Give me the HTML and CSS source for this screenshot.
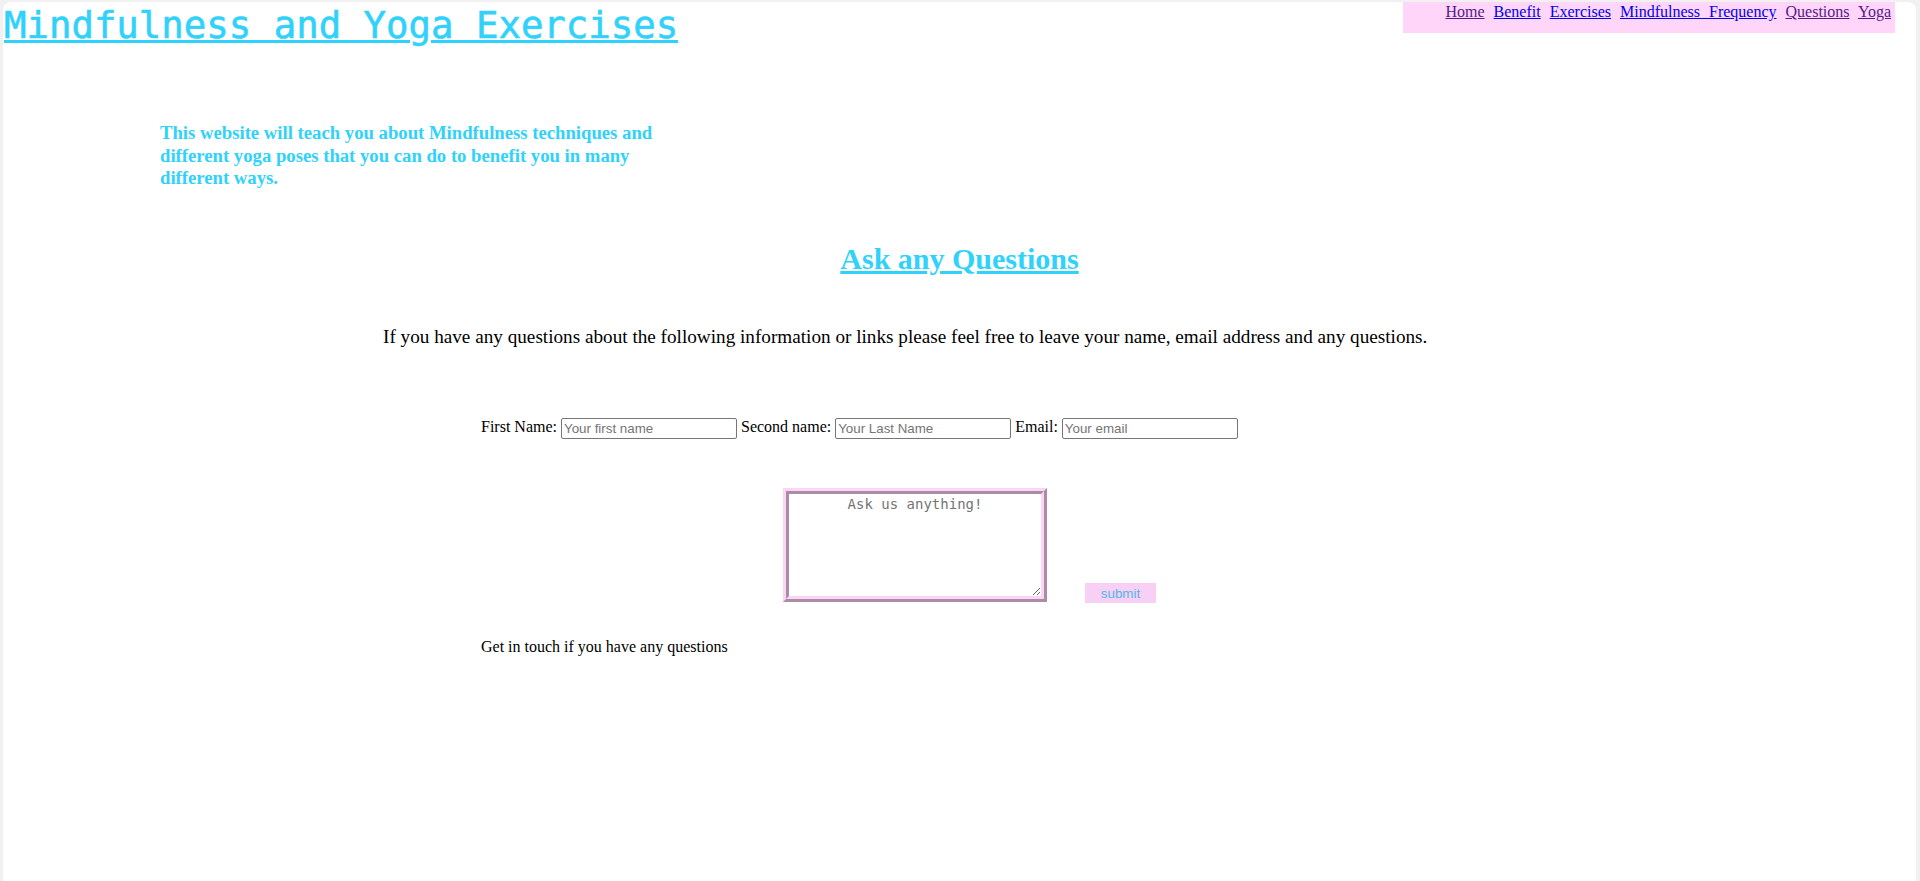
FILE: index.html
```html
<!DOCTYPE html>
<html lang="en">
<head>
<meta charset="utf-8">
<title>Mindfulness and Yoga Exercises</title>
<link rel="stylesheet" href="styles.css">
</head>
<body>
<div class="window">
  <header class="top">
    <h1 class="title"><a href="#">Mindfulness and Yoga Exercises</a></h1>
    <nav class="nav">
      <a href="#" class="visited">Home</a> <a href="#">Benefit</a> <a href="#">Exercises</a> <a href="#">Mindfulness Frequency</a> <a href="#" class="visited">Questions</a> <a href="#" class="visited">Yoga</a>
    </nav>
  </header>

  <p class="intro">This website will teach you about Mindfulness techniques and different yoga poses that you can do to benefit you in many different ways.</p>

  <h2 class="ask">Ask any Questions</h2>

  <p class="lead">If you have any questions about the following information or links please feel free to leave your name, email address and any questions.</p>

  <form class="form">
    <div class="fields">
      <label>First Name:</label> <input type="text" placeholder="Your first name"> <label>Second name:</label> <input type="text" placeholder="Your Last Name"> <label>Email:</label> <input type="text" placeholder="Your email">
    </div>
    <div class="message">
      <textarea placeholder="Ask us anything!"></textarea>
      <button type="button" class="submit">submit</button>
    </div>
    <p class="touch">Get in touch if you have any questions</p>
  </form>
</div>
</body>
</html>
```

FILE: styles.css
```css
html, body {
  margin: 0;
  padding: 0;
}
body {
  background: #f1f1f1;
  font-family: "Liberation Serif", "Times New Roman", serif;
  font-size: 16px;
  color: #000;
}
.window {
  margin: 2px 4px 0 3px;
  min-height: 879px;
  background: #fff;
  border-radius: 8px 8px 0 0;
  overflow: hidden;
}
.top {
  display: flex;
  justify-content: space-between;
  align-items: flex-start;
}
.title {
  margin: 2px 0 0 1px;
  font-family: "DejaVu Sans Mono", "Liberation Mono", monospace;
  font-size: 37.35px;
  font-weight: normal;
  line-height: 43px;
}
.title a {
  color: #30d2fb;
  text-decoration: underline;
  text-decoration-thickness: 3px;
  -webkit-text-stroke: 0.6px #30d2fb;
}
.nav {
  width: 484px;
  height: 30px;
  margin-right: 21px;
  padding: 1px 4px 0 4px;
  background: #ffd6f9;
  text-align: right;
  word-spacing: 5px;
  line-height: 18px;
}
.nav a {
  color: #0000ee;
}
.nav a.visited {
  color: #551a8b;
}
.intro {
  width: 530px;
  margin: 75px 0 0 157px;
  font-size: 18.7px;
  font-weight: bold;
  line-height: 22.5px;
  color: #30d2fb;
}
.ask {
  margin: 52px 0 0 0;
  text-align: center;
  font-size: 30px;
  font-weight: bold;
  color: #30d2fb;
  text-decoration: underline;
}
.lead {
  margin: 50px 0 0 380px;
  font-size: 19.2px;
}
.form {
  margin: 70.5px 0 0 478px;
}
.fields label {
  font-size: 16px;
}
.fields input {
  width: 176px;
  height: 21px;
  box-sizing: border-box;
  padding: 1px 2px;
  border: 1px solid #767676;
  border-radius: 2px;
  font-family: "Liberation Sans", Arial, sans-serif;
  font-size: 13.33px;
  vertical-align: middle;
}
.fields input::placeholder {
  color: #757575;
}
.message {
  display: flex;
  align-items: flex-end;
  gap: 38px;
  margin: 49px 0 0 302px;
}
.message textarea {
  width: 264px;
  height: 114px;
  box-sizing: border-box;
  border: 6px ridge #fdd3f6;
  padding: 2px;
  resize: both;
  font-family: "DejaVu Sans Mono", "Liberation Mono", monospace;
  font-size: 14px;
  text-align: center;
}
.message textarea::placeholder {
  color: #757575;
}
.submit {
  width: 71px;
  height: 20px;
  margin-bottom: -1px;
  padding: 0;
  border: none;
  background: #f9d0f5;
  color: #4db8e8;
  font-family: "Liberation Sans", Arial, sans-serif;
  font-size: 13.33px;
}
.touch {
  margin: 35.5px 0 0 0;
  font-size: 16px;
}
```
